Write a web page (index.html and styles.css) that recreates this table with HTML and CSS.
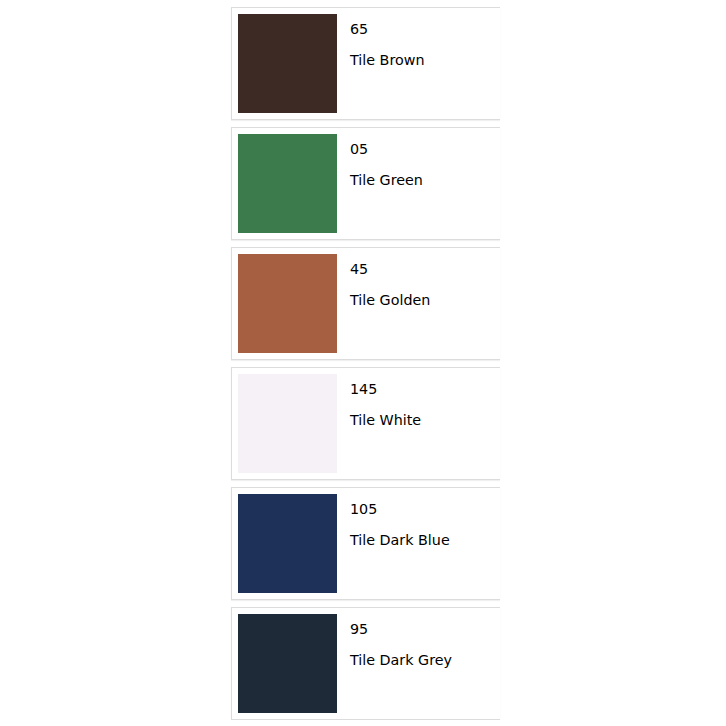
FILE: index.html
```html
<!DOCTYPE html>
<html lang="en">
<head>
    <meta charset="UTF-8">
    <meta name="viewport" content="width=device-width, initial-scale=1.0">
    <title>Tile Colours</title>
    <link rel="stylesheet" href="styles.css">
</head>
<body>
    <div class="colours">
        <div class="colour">
            <div class="swatch brown"></div>
            <div class="info">
                <p class="code">65</p>
                <p class="name">Tile Brown</p>
            </div>
        </div>

        <div class="colour">
            <div class="swatch green"></div>
            <div class="info">
                <p class="code">05</p>
                <p class="name">Tile Green</p>
            </div>
        </div>

        <div class="colour">
            <div class="swatch golden"></div>
            <div class="info">
                <p class="code">45</p>
                <p class="name">Tile Golden</p>
            </div>
        </div>

        <div class="colour">
            <div class="swatch white"></div>
            <div class="info">
                <p class="code">145</p>
                <p class="name">Tile White</p>
            </div>
        </div>

        <div class="colour">
            <div class="swatch dark-blue"></div>
            <div class="info">
                <p class="code">105</p>
                <p class="name">Tile Dark Blue</p>
            </div>
        </div>

        <div class="colour">
            <div class="swatch dark-grey"></div>
            <div class="info">
                <p class="code">95</p>
                <p class="name">Tile Dark Grey</p>
            </div>
        </div>
    </div>
</body>
</html>
```

FILE: styles.css
```css
* {
    margin: 0;
    padding: 0;
    box-sizing: border-box;
}

body {
    font-family: "DejaVu Sans", Verdana, sans-serif;
    color: #000;
    background: white;
}

.colours {
    width: 269px;
    margin-left: 231px;
    padding-top: 7px;
    display: flex;
    flex-direction: column;
    gap: 7px;
}

.colour {
    display: flex;
    gap: 13px;
    padding: 6px;
    border: 1px solid #dcdcdc;
    border-right: none;
    box-shadow: 0 1px 1px rgba(0,0,0,0.06);
}

.swatch {
    width: 99px;
    height: 99px;
    flex-shrink: 0;
}

.brown { background: #3d2a24; }
.green { background: #3b7b4c; }
.golden { background: #a65f40; }
.white { background: #f6f0f7; }
.dark-blue { background: #1e3158; }
.dark-grey { background: #1f2a38; }

.info {
    padding-top: 5px;
    font-size: 14.3px;
}

.code {
    line-height: 20px;
}

.name {
    line-height: 20px;
    margin-top: 11px;
}
```
